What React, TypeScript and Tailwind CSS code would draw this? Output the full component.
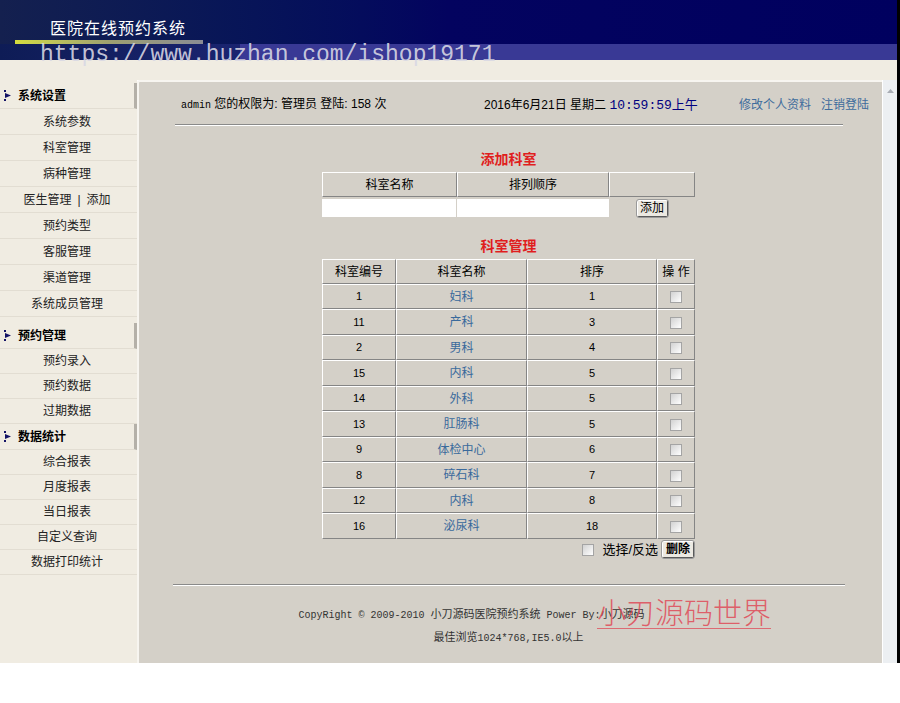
import React from 'react';

const groups = [
  {
    title: '系统设置',
    gap: false,
    itemH: 'h-[26px]',
    items: ['系统参数', '科室管理', '病种管理', '医生管理|添加', '预约类型', '客服管理', '渠道管理', '系统成员管理'],
  },
  { title: '预约管理', gap: true, itemH: 'h-[25px]', items: ['预约录入', '预约数据', '过期数据'] },
  {
    title: '数据统计',
    gap: false,
    itemH: 'h-[25px]',
    items: ['综合报表', '月度报表', '当日报表', '自定义查询', '数据打印统计'],
  },
];

const depts: [string, string, string][] = [
  ['1', '妇科', '1'],
  ['11', '产科', '3'],
  ['2', '男科', '4'],
  ['15', '内科', '5'],
  ['14', '外科', '5'],
  ['13', '肛肠科', '5'],
  ['9', '体检中心', '6'],
  ['8', '碎石科', '7'],
  ['12', '内科', '8'],
  ['16', '泌尿科', '18'],
];

const cell =
  'border border-t-white border-l-white border-r-[#858585] border-b-[#858585] text-center align-middle p-0';

function NavArrow() {
  return (
    <svg width="8" height="11" viewBox="0 0 8 11" className="shrink-0">
      <rect x="0" y="0" width="2" height="2" fill="#141466" />
      <path d="M1 3 L7 5.5 L1 8 Z" fill="#141466" />
      <rect x="0" y="9" width="2" height="2" fill="#141466" />
    </svg>
  );
}

function Box() {
  return (
    <span className="inline-block w-[12px] h-[12px] border border-[#a4a4a4] bg-gradient-to-br from-[#d2d2d2] to-white align-middle" />
  );
}

function Sidebar() {
  return (
    <div className="w-[137px] shrink-0 bg-[#f0ece2] pt-[3px] text-[12px] text-[#222]">
      {groups.map((g) => (
        <div key={g.title} className={g.gap ? 'mt-[6px]' : ''}>
          <div className="h-[26px] flex items-center gap-[6px] pl-[4px] border-b border-[#e2ddd2] border-r-[3px] border-r-[#b4b0a8] font-bold text-black">
            <NavArrow />
            <span>{g.title}</span>
          </div>
          {g.items.map((it) => (
            <div
              key={it}
              className={`${g.itemH} flex items-center justify-center pr-[3px] border-b border-[#e2ddd2]`}
            >
              {it.includes('|') ? (
                <span>
                  医生管理<span className="mx-[6px]">|</span>添加
                </span>
              ) : (
                it
              )}
            </div>
          ))}
        </div>
      ))}
    </div>
  );
}

function MainPanel() {
  return (
    <div className="relative flex-1 bg-[#d4d0c8] border-t-2 border-l-2 border-[#f7f5f0] rounded-tl-[3px] text-[12px] text-black">
      {/* user status bar */}
      <div className="mt-[15px] h-[16px] leading-[16px] flex items-center pl-[42px] pr-[13px] whitespace-nowrap">
        <div className="w-[303px]">
          <span className="font-['Liberation_Mono',monospace] text-[10px]">admin</span> 您的权限为: 管理员 登陆: 158 次
        </div>
        <div className="flex-1">
          2016年6月21日 星期二 <span className="text-[#000080] font-['Liberation_Mono','Noto_Sans_CJK_SC',monospace] text-[13px]">10:59:59上午</span>
        </div>
        <div className="flex gap-[10px] text-[#3e6c9c]">
          <span>修改个人资料</span>
          <span>注销登陆</span>
        </div>
      </div>
      <div className="ml-[36px] mt-[11px] w-[668px] h-[2px] border-t border-[#8a8a8a] border-b border-b-white" />

      <div className="flex flex-col items-center pr-[4px]">
        {/* add department */}
        <div className="mt-[24px] h-[18px] leading-[18px] text-[14px] font-bold text-[#e01e1e]">添加科室</div>
        <table className="mt-[4px] w-[373px] table-fixed border-separate border-spacing-0">
          <colgroup>
            <col className="w-[135px]" />
            <col className="w-[152px]" />
            <col className="w-[86px]" />
          </colgroup>
          <tbody>
            <tr className="h-[25px]">
              <td className={cell}>科室名称</td>
              <td className={cell}>排列顺序</td>
              <td className={cell}></td>
            </tr>
            <tr className="h-[21px]">
              <td className="p-0 pr-[1px]">
                <div className="h-[18px] bg-white" />
              </td>
              <td className="p-0">
                <div className="h-[18px] bg-white" />
              </td>
              <td className="p-0 text-center">
                <button className="h-[17px] w-[31px] leading-[13px] text-[12px] bg-[#ece9e2] border border-t-white border-l-white border-r-[#5a5a5a] border-b-[#5a5a5a] rounded-[2px] outline outline-1 outline-[#9a9a9a]">
                  添加
                </button>
              </td>
            </tr>
          </tbody>
        </table>

        {/* department list */}
        <div className="mt-[19px] h-[18px] leading-[18px] text-[14px] font-bold text-[#e01e1e]">科室管理</div>
        <table className="mt-[4px] w-[373px] table-fixed border-separate border-spacing-0">
          <colgroup>
            <col className="w-[74px]" />
            <col className="w-[131px]" />
            <col className="w-[130px]" />
            <col className="w-[38px]" />
          </colgroup>
          <tbody>
            <tr className="h-[25px]">
              <td className={cell}>科室编号</td>
              <td className={cell}>科室名称</td>
              <td className={cell}>排序</td>
              <td className={cell}>操 作</td>
            </tr>
            {depts.map(([id, name, order], i) => (
              <tr key={id} className={i % 2 ? 'h-[26px]' : 'h-[25px]'}>
                <td className={`${cell} text-[11px]`}>{id}</td>
                <td className={`${cell} text-[#3a6a9c]`}>{name}</td>
                <td className={`${cell} text-[11px]`}>{order}</td>
                <td className={cell}>
                  <Box />
                </td>
              </tr>
            ))}
          </tbody>
        </table>
        <div className="w-[373px] h-[19px] mt-[1px] flex items-center justify-end">
          <Box />
          <span className="ml-[8px] text-[13px]">选择/反选</span>
          <button className="ml-[4px] mr-[1px] h-[17px] w-[32px] leading-[13px] text-[12px] font-bold bg-[#ece9e2] border border-t-white border-l-white border-r-[#5a5a5a] border-b-[#5a5a5a] rounded-[2px] outline outline-1 outline-[#9a9a9a]">
            删除
          </button>
        </div>

        {/* footer */}
        <div className="mt-[25px] w-[672px] h-[2px] border-t border-[#8a8a8a] border-b border-b-white" />
        <div className="mt-[22px] h-[14px] leading-[14px] pr-[74px] whitespace-nowrap text-[#333] text-[11px] font-['Liberation_Mono','Noto_Sans_CJK_SC',monospace]">
          <span className="text-[10px]">CopyRight © 2009-2010 </span>小刀源码医院预约系统
          <span className="text-[10px]"> Power By:</span>小刀源码
        </div>
        <div className="mt-[9px] h-[14px] leading-[14px] whitespace-nowrap text-[#333] text-[11px] font-['Liberation_Mono','Noto_Sans_CJK_SC',monospace]">
          最佳浏览<span className="text-[10px]">1024*768,IE5.0</span>以上
        </div>
      </div>

      {/* site stamp over the footer */}
      <div className="absolute left-[458px] top-[512px] text-[29px] leading-[34px] font-extralight text-[#e0404f]/80 border-b border-[#e0404f]/70 font-['Noto_Sans_CJK_SC',sans-serif] whitespace-nowrap">
        小刃源码世界
      </div>
    </div>
  );
}

export default function App() {
  return (
    <div className="w-[900px] h-[703px] bg-white font-['Liberation_Sans','Noto_Sans_CJK_SC',sans-serif] overflow-hidden">
      <div className="flex h-[663px]">
        <div className="flex-1 flex flex-col min-w-0">
          {/* banner */}
          <div className="relative h-[60px] bg-gradient-to-r from-[#14204f] via-[#03035f] to-[#00005f] flex flex-col">
            <div className="h-[44px] pl-[15px] pt-[17px]">
              <div className="ml-[35px] h-[20px] leading-[20px] text-[16px] tracking-[1px] text-white font-['Noto_Sans_CJK_SC',sans-serif]">
                医院在线预约系统
              </div>
              <div className="mt-[3px] w-[188px] h-[4px] bg-gradient-to-r from-[#d4dc3c] via-[#9ea070] to-[#8a8c94]" />
            </div>
            <div className="h-[16px] flex">
              <div className="w-[240px] bg-gradient-to-r from-[#0e1c56] to-[#1a2470]" />
              <div className="flex-1 bg-[#393995]" />
            </div>
            <div className="absolute left-[40px] top-[44px] text-[23px] leading-[23px] text-[#d8d8e4]/90 font-['Liberation_Mono',monospace] whitespace-nowrap">
              https://www.huzhan.com/ishop19171
            </div>
          </div>
          <div className="h-[20px] bg-[#f0ece2]" />
          <div className="flex flex-1">
            <Sidebar />
            <MainPanel />
            {/* scrollbar */}
            <div className="w-[15px] shrink-0 bg-[#eceff2] border-l border-white flex justify-center pt-[9px]">
              <svg width="7" height="4" viewBox="0 0 7 4">
                <path d="M0 4 L3.5 0 L7 4 Z" fill="#a8acb4" />
              </svg>
            </div>
          </div>
        </div>
        <div className="w-[3px] bg-black" />
      </div>
    </div>
  );
}
